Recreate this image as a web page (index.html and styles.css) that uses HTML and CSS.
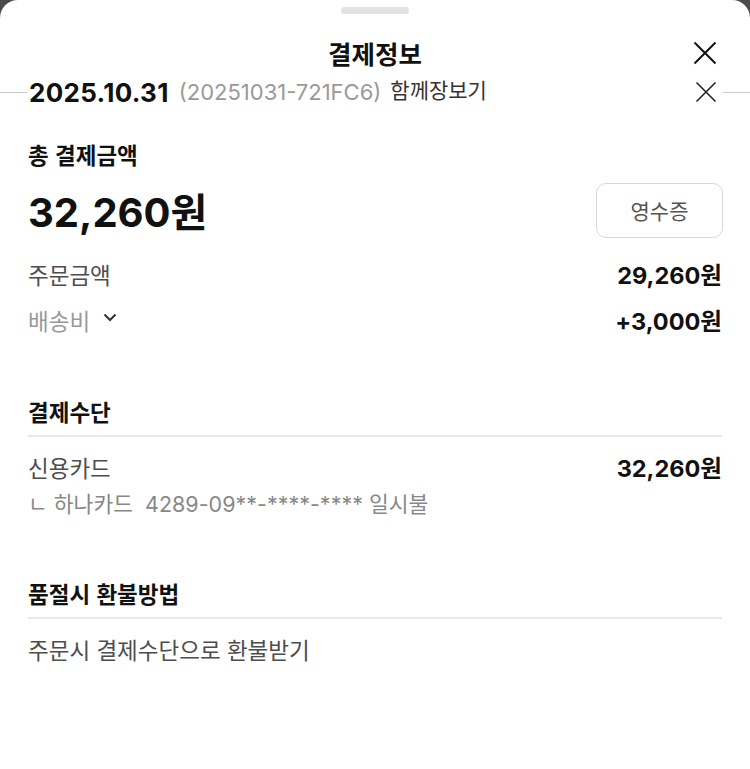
FILE: index.html
```html
<!DOCTYPE html>
<html lang="ko">
<head>
<meta charset="utf-8">
<title>결제정보</title>
<link rel="stylesheet" href="styles.css">
</head>
<body>
<div class="sheet">
  <div class="handle"></div>
  <div class="title-row">
    <span></span>
    <h1 class="title">결제정보</h1>
    <button class="close" aria-label="닫기">
      <svg width="24" height="24" viewBox="0 0 24 24"><path d="M1.5 1.5L22.5 22.5M22.5 1.5L1.5 22.5" stroke="#111" stroke-width="2" fill="none"/></svg>
    </button>
  </div>
  <div class="date-row">
    <span class="rule"></span>
    <span class="date">2025.10.31</span>
    <span class="order-no">(20251031-721FC6)</span>
    <span class="tag">함께장보기</span>
    <span class="spacer"></span>
    <svg class="close2" width="22" height="22" viewBox="0 0 22 22"><path d="M1.5 1.5L20.5 20.5M20.5 1.5L1.5 20.5" stroke="#222" stroke-width="1.6" fill="none"/></svg>
    <span class="rule rule-right"></span>
  </div>

  <section class="block">
    <h2 class="head">총 결제금액</h2>
    <div class="total-row">
      <span class="total">32,260원</span>
      <button class="receipt">영수증</button>
    </div>
    <div class="line first">
      <span class="label">주문금액</span>
      <span class="value">29,260원</span>
    </div>
    <div class="line">
      <span class="label muted">배송비
        <svg class="chev" width="14" height="9" viewBox="0 0 14 9"><path d="M1.5 1.5L7 7L12.5 1.5" stroke="#333" stroke-width="2" fill="none"/></svg>
      </span>
      <span class="value">+3,000원</span>
    </div>
  </section>

  <section class="block pay">
    <h2 class="head">결제수단</h2>
    <div class="divider"></div>
    <div class="line tight">
      <span class="label">신용카드</span>
      <span class="value">32,260원</span>
    </div>
    <div class="card">ㄴ 하나카드&nbsp;&nbsp;4289-09**-****-**** 일시불</div>
  </section>

  <section class="block refund">
    <h2 class="head">품절시 환불방법</h2>
    <div class="divider"></div>
    <div class="line tight">
      <span class="label">주문시 결제수단으로 환불받기</span>
    </div>
  </section>
</div>
</body>
</html>
```

FILE: styles.css
```css
* { box-sizing: border-box; }
html, body { margin: 0; padding: 0; }
body {
  background: #4b4b4b;
  font-family: "Inter", "Noto Sans CJK KR", sans-serif;
  color: #111;
}
.sheet {
  background: #fff;
  border-radius: 18px 18px 0 0;
  min-height: 769px;
  padding-top: 7px;
}
.handle {
  width: 68px;
  height: 7px;
  border-radius: 4px;
  background: #e2e2e2;
  margin: 0 auto;
}
.title-row {
  display: grid;
  grid-template-columns: 1fr auto 1fr;
  align-items: center;
  height: 44px;
  margin-top: 17px;
}
.title {
  margin: 0;
  font-family: "Noto Sans CJK KR", sans-serif;
  font-size: 25.5px;
  font-weight: 700;
  line-height: 42px;
}
.close {
  justify-self: end;
  margin-right: 33px;
  padding: 0;
  border: 0;
  background: none;
  width: 24px;
  height: 24px;
  display: flex;
}
.date-row {
  display: flex;
  align-items: center;
  height: 30px;
  margin-top: 2px;
}
.rule {
  width: 27px;
  height: 1px;
  background: #c8c8c8;
  margin-right: 2px;
}
.rule-right {
  width: 27px;
  margin: 0 0 0 6px;
  background: #c8ccd0;
}
.date {
  font-size: 26px;
  font-weight: 700;
  letter-spacing: 0.3px;
}
.order-no {
  font-size: 22px;
  color: #999;
  margin-left: 10px;
}
.tag {
  font-family: "Noto Sans CJK KR", sans-serif;
  font-size: 21px;
  color: #333;
  margin-left: 9px;
  position: relative;
  top: -3px;
}
.spacer { flex: 1; }
.close2 { display: block; }

.block {
  padding: 0 28px;
}
.head {
  margin: 0;
  height: 28px;
  line-height: 24px;
  font-family: "Noto Sans CJK KR", sans-serif;
  font-size: 22.5px;
  font-weight: 700;
}
.block:first-of-type { margin-top: 35px; }
.total-row {
  display: flex;
  justify-content: space-between;
  align-items: center;
  margin-top: 13px;
  height: 54px;
}
.total {
  font-size: 40px;
  font-weight: 700;
}
.receipt {
  width: 127px;
  height: 55px;
  border: 1px solid #d8d8d8;
  border-radius: 10px;
  background: #fff;
  font-family: "Noto Sans CJK KR", sans-serif;
  font-size: 21px;
  color: #555;
  padding: 0;
  margin-right: -1px;
}
.line {
  display: flex;
  justify-content: space-between;
  align-items: center;
  height: 28px;
  margin-top: 18px;
}
.line.first { margin-top: 23px; }
.line.tight { margin-top: 16px; }
.label {
  font-family: "Noto Sans CJK KR", sans-serif;
  font-size: 22.5px;
  color: #4d4d4d;
  display: flex;
  align-items: center;
}
.label.muted { color: #999; }
.chev { margin-left: 13px; margin-top: -5px; }
.value {
  font-size: 23.5px;
  font-weight: 700;
}
.pay { margin-top: 65px; }
.refund { margin-top: 63px; }
.divider {
  height: 2px;
  background: #e8e8e8;
  margin-top: 8px;
}
.card {
  margin-top: 9px;
  height: 28px;
  line-height: 28px;
  font-size: 21.5px;
  color: #888;
}
```
